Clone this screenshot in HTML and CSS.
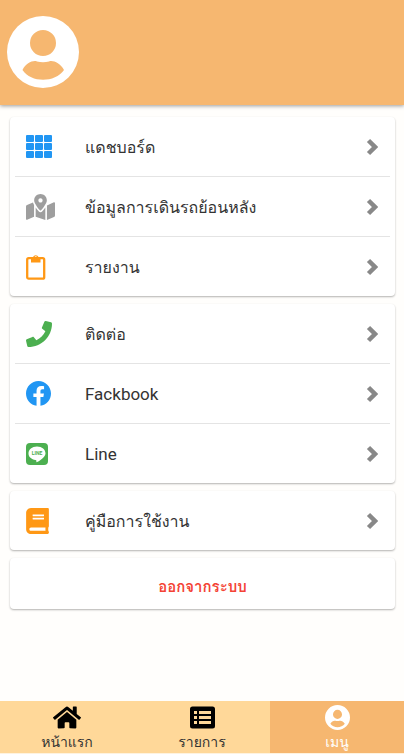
FILE: index.html
```html
<!DOCTYPE html>
<html lang="th">
<head>
<meta charset="utf-8">
<meta name="viewport" content="width=device-width, initial-scale=1">
<title>เมนู</title>
<link rel="stylesheet" href="styles.css">
</head>
<body>
<svg class="defs" aria-hidden="true">
  <symbol id="user" viewBox="0 0 72 72"><path fill="currentColor" fill-rule="evenodd" d="M36 0a36 36 0 1 1 0 72a36 36 0 0 1 0-72zM36 14a13 13 0 1 0 0 26a13 13 0 0 0 0-26zM15.500 54C24 67 48 67 57 54C53 47 46 44 42 45.500Q36 47 30 45.500C26 44 19 47 15.500 54z"/></symbol>
  <symbol id="chevron" viewBox="0 0 12 18"><path d="M2.500 2.500L9 9l-6.500 6.500" fill="none" stroke="currentColor" stroke-width="4.500"/></symbol>
</svg>
<header class="header">
  <svg class="avatar" role="img" aria-label="ผู้ใช้"><use href="#user"/></svg>
</header>
<main class="content">
  <nav class="card">
    <a class="row" href="#">
      <svg class="icon blue" width="26" height="23" viewBox="0 0 26 23"><g fill="currentColor"><rect width="8" height="7" rx="1"/><rect x="9" width="8" height="7" rx="1"/><rect x="18" width="8" height="7" rx="1"/><rect y="8" width="8" height="7" rx="1"/><rect x="9" y="8" width="8" height="7" rx="1"/><rect x="18" y="8" width="8" height="7" rx="1"/><rect y="16" width="8" height="7" rx="1"/><rect x="9" y="16" width="8" height="7" rx="1"/><rect x="18" y="16" width="8" height="7" rx="1"/></g></svg>
      <span class="label">แดชบอร์ด</span><svg class="chevron"><use href="#chevron"/></svg>
    </a>
    <a class="row" href="#">
      <svg class="icon grey" width="29" height="26" viewBox="0 0 576 512"><path fill="currentColor" d="M288 0c-69.590 0-126 56.410-126 126 0 56.260 82.350 158.800 113.900 196.020 6.390 7.540 17.820 7.540 24.200 0C331.650 284.800 414 182.260 414 126 414 56.410 357.590 0 288 0zm0 168c-23.200 0-42-18.800-42-42s18.800-42 42-42 42 18.800 42 42-18.800 42-42 42zM20.120 215.950A32 32 0 0 0 0 245.660v250.320c0 11.320 11.430 19.060 21.940 14.860L160 448V214.920c-8.840-15.980-16.070-31.540-21.250-46.420L20.120 215.950zM288 359.670c-14.070 0-27.380-6.180-36.510-16.960-19.660-23.200-40.570-49.620-59.490-76.720v182l192 64V266c-18.920 27.090-39.820 53.520-59.490 76.720-9.130 10.770-22.440 16.950-36.510 16.950zm266.060-198.510L416 224v288l139.880-55.950A32 32 0 0 0 576 426.340V176.020c0-11.320-11.430-19.060-21.940-14.860z"/></svg>
      <span class="label">ข้อมูลการเดินรถย้อนหลัง</span><svg class="chevron"><use href="#chevron"/></svg>
    </a>
    <a class="row" href="#">
      <svg class="icon orange" width="20" height="26" viewBox="0 0 20 26"><rect x="1.200" y="4.200" width="17" height="20.500" rx="1.500" fill="none" stroke="currentColor" stroke-width="2.300"/><path fill="currentColor" fill-rule="evenodd" d="M5 8.500V4.500Q6 3.500 7 3a3 3 0 0 1 5.500 0Q13.500 3.500 14.500 4.500v4zM9.750 2.300a1.200 1.200 0 1 0 0 2.400a1.200 1.200 0 0 0 0-2.400z"/></svg>
      <span class="label">รายงาน</span><svg class="chevron"><use href="#chevron"/></svg>
    </a>
  </nav>
  <nav class="card">
    <a class="row" href="#">
      <svg class="icon green" width="26" height="26" viewBox="0 0 512 512"><path fill="currentColor" d="M493.400 24.600l-104-24c-11.300-2.600-22.900 3.300-27.500 13.900l-48 112c-4.200 9.800-1.400 21.300 6.900 28l60.600 49.600c-36 76.700-98.900 140.500-177.200 177.200l-49.600-60.600c-6.800-8.300-18.200-11.100-28-6.900l-112 48C3.900 366.500-2 378.100.6 389.400l24 104C27.100 504.200 36.700 512 48 512c256.100 0 464-207.500 464-464 0-11.200-7.700-20.900-18.600-23.400z"/></svg>
      <span class="label">ติดต่อ</span><svg class="chevron"><use href="#chevron"/></svg>
    </a>
    <a class="row" href="#">
      <svg class="icon blue" width="25" height="25" viewBox="8 8 496 496"><path fill="currentColor" d="M504 256C504 119 393 8 256 8S8 119 8 256c0 123.780 90.690 226.380 209.250 245V327.690h-63V256h63v-54.640c0-62.150 37-96.480 93.670-96.480 27.140 0 55.520 4.840 55.520 4.840v61h-31.280c-30.800 0-40.410 19.120-40.410 38.730V256h68.780l-11 71.690h-57.780V501C413.310 482.380 504 379.780 504 256z"/></svg>
      <span class="label latin" lang="en">Fackbook</span><svg class="chevron"><use href="#chevron"/></svg>
    </a>
    <a class="row" href="#">
      <svg class="icon green" width="23" height="22" viewBox="0 0 23 22"><rect width="22" height="22" rx="4" fill="currentColor"/><path fill="#fff" d="M11 3.500c-5 0-8.500 3-8.500 7c0 3.400 3 6 7 6.500c1.400.3.800 1.500.8 2.300c1.500-.3 9.200-4.600 9.200-8.800c0-4-3.500-7-8.500-7z"/><text class="line-mark" x="11" y="12" text-anchor="middle">LINE</text></svg>
      <span class="label latin" lang="en">Line</span><svg class="chevron"><use href="#chevron"/></svg>
    </a>
  </nav>
  <nav class="card">
    <a class="row" href="#">
      <svg class="icon orange" width="23" height="26" viewBox="0 0 448 512"><path fill="currentColor" d="M448 360V24c0-13.300-10.700-24-24-24H96C43 0 0 43 0 96v320c0 53 43 96 96 96h328c13.300 0 24-10.700 24-24v-16c0-7.500-3.500-14.300-8.900-18.700-4.200-15.400-4.200-59.300 0-74.700 5.400-4.300 8.900-11.100 8.900-18.600zM128 134c0-3.300 2.700-6 6-6h212c3.300 0 6 2.700 6 6v20c0 3.300-2.700 6-6 6H134c-3.300 0-6-2.700-6-6v-20zm0 64c0-3.300 2.700-6 6-6h212c3.300 0 6 2.700 6 6v20c0 3.300-2.700 6-6 6H134c-3.300 0-6-2.700-6-6v-20zm253.400 250H96c-17.700 0-32-14.300-32-32 0-17.600 14.400-32 32-32h285.400c-1.900 17.100-1.900 46.900 0 64z"/></svg>
      <span class="label">คู่มือการใช้งาน</span><svg class="chevron"><use href="#chevron"/></svg>
    </a>
  </nav>
  <button class="card logout" type="button">ออกจากระบบ</button>
</main>
<nav class="tabs">
  <a class="tab" href="#"><svg class="tab-icon" width="28" height="25" viewBox="0 0 576 512"><path fill="currentColor" d="M280.370 148.260L96 300.110V464a16 16 0 0 0 16 16l112.060-.29a16 16 0 0 0 15.920-16V368a16 16 0 0 1 16-16h64a16 16 0 0 1 16 16v95.640a16 16 0 0 0 16 16.050L464 480a16 16 0 0 0 16-16V300L295.670 148.260a12.190 12.190 0 0 0-15.300 0zM571.600 251.470L488 182.560V44.050a12 12 0 0 0-12-12h-56a12 12 0 0 0-12 12v72.610L318.470 43a48 48 0 0 0-61 0L4.340 251.470a12 12 0 0 0-1.600 16.900l25.500 31A12 12 0 0 0 45.150 301l235.220-193.740a12.190 12.190 0 0 1 15.300 0L530.900 301a12 12 0 0 0 16.900-1.600l25.500-31a12 12 0 0 0-1.700-16.930z"/></svg><span>หน้าแรก</span></a>
  <a class="tab" href="#"><svg class="tab-icon" width="25" height="25" viewBox="0 0 25 25"><path fill="currentColor" fill-rule="evenodd" d="M2.500 1.500h20a2.500 2.500 0 0 1 2.500 2.500v17a2.500 2.500 0 0 1-2.500 2.500h-20A2.500 2.500 0 0 1 0 21V4a2.500 2.500 0 0 1 2.500-2.500zM4 6v3h3V6zM9 6v3h12V6zM4 11v3h3v-3zM9 11v3h12v-3zM4 16v3h3v-3zM9 16v3h12v-3z"/></svg><span>รายการ</span></a>
  <a class="tab active" href="#" aria-current="page"><svg class="tab-icon" width="25" height="25"><use href="#user"/></svg><span>เมนู</span></a>
</nav>
</body>
</html>
```
FILE: styles.css
```css
* { box-sizing: border-box; }
body {
  margin: 0;
  min-height: 100vh;
  display: flex;
  flex-direction: column;
  background: #fffefc;
  color: #333;
  font-family: Roboto, Loma, "Noto Sans Thai", "Noto Sans", sans-serif;
  font-size: 16px;
}
a { color: inherit; text-decoration: none; }
svg { display: block; flex: none; }
.defs { position: absolute; width: 0; height: 0; }
.header {
  padding: 16px 7px 17px;
  background: #f6b770;
  box-shadow: 0 1px 4px rgba(0, 0, 0, 0.4);
}
.avatar { width: 72px; height: 72px; color: #fff; }
.content {
  flex: 1;
  display: flex;
  flex-direction: column;
  gap: 8px;
  padding: 12px 9px 12px 10px;
}
.card {
  padding: 0 5px;
  border-radius: 4px;
  background: #fff;
  box-shadow: 0 1px 2px rgba(0, 0, 0, 0.3);
}
.row {
  display: grid;
  grid-template-columns: 59px 1fr 12px;
  align-items: center;
  height: 59px;
  padding: 0 12px 0 11px;
}
.row + .row { height: 60px; border-top: 1px solid #e4e4e4; }
.label { padding-top: 2px; line-height: 24px; }
.latin { padding-top: 0; font-size: 17px; }
.chevron { width: 12px; height: 18px; color: #888; }
.blue { color: #2196f3; }
.grey { color: #9e9e9e; }
.orange { color: #ff9815; }
.green { color: #4caf50; }
.line-mark { fill: #4caf50; font: bold 5px Roboto, sans-serif; }
.logout {
  height: 51px;
  padding-top: 6px;
  border: 0;
  color: #f44336;
  font: bold 15px Roboto, Loma, "Noto Sans Thai", "Noto Sans", sans-serif;
}
.tabs {
  position: sticky;
  bottom: 0;
  display: grid;
  grid-template-columns: 134fr 136fr 134fr;
  border-bottom: 1px solid #fff3df;
  background: #ffd899;
  font-size: 14px;
}
.tab {
  display: flex;
  flex-direction: column;
  align-items: center;
  height: 52px;
  padding-top: 4px;
  line-height: 24px;
}
.tab-icon { color: #000; }
.active, .active .tab-icon { color: #fff; }
.active { background: #f6b770; }
```
